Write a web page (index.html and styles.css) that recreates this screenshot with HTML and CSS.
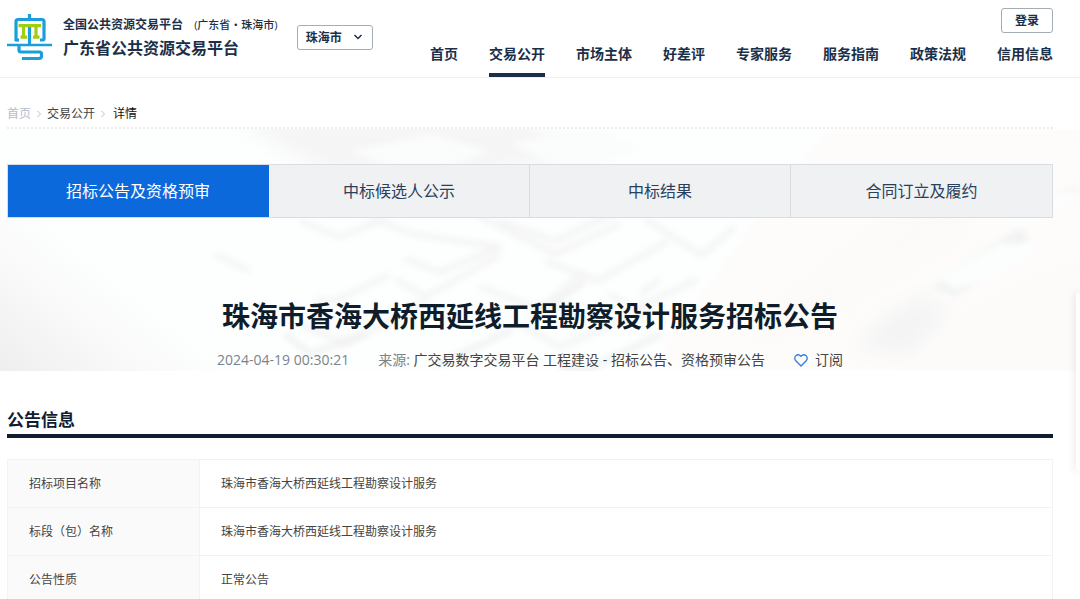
FILE: index.html
```html
<!DOCTYPE html>
<html lang="zh-CN">
<head>
<meta charset="utf-8">
<meta name="viewport" content="width=device-width, initial-scale=1">
<title>广东省公共资源交易平台</title>
<link rel="stylesheet" href="styles.css">
</head>
<body>
<header class="header">
  <a class="brand" href="#">
    <svg class="logo" viewBox="0 0 45 48" aria-hidden="true">
      <g fill="none" stroke="#1b9fdb" stroke-width="3.200">
        <path d="M22.500 0V7"/>
        <path d="M9 27V7.500Q9 5.500 11 5.500H35Q37 5.500 37 7.500V24.500Q37 26 35.500 26H33"/>
        <path d="M8 26H12"/>
        <path d="M22.500 13V31"/>
        <path d="M0 31H45" stroke-width="2.600"/>
        <path d="M12 32V36Q12 38 14 38H32.500Q34.500 38 34.500 40V42Q34.500 44.500 32 44.500H15"/>
      </g>
      <g fill="none" stroke="#9fce12" stroke-width="3.200">
        <path d="M11.500 11.700H34M16.500 12V23M29 12V23M13.500 23.200H20M26 23.200H32.500"/>
      </g>
    </svg>
    <span class="brand-text">
      <span class="brand-top">全国公共资源交易平台 <span class="brand-area">(广东省・珠海市)</span></span>
      <span class="brand-name">广东省公共资源交易平台</span>
    </span>
  </a>
  <div class="city">
    <select class="city-select" aria-label="选择城市"><option>珠海市</option></select>
    <svg class="city-arrow" viewBox="0 0 10 6" aria-hidden="true"><path d="M1.500 1L5 4.500L8.500 1" fill="none" stroke="#1b3048" stroke-width="1.500"/></svg>
  </div>
  <div class="header-right">
    <button class="login" type="button">登录</button>
    <nav class="nav">
      <a href="#">首页</a>
      <a class="active" href="#" aria-current="page">交易公开</a>
      <a href="#">市场主体</a>
      <a href="#">好差评</a>
      <a href="#">专家服务</a>
      <a href="#">服务指南</a>
      <a href="#">政策法规</a>
      <a href="#">信用信息</a>
    </nav>
  </div>
</header>
<main>
  <nav class="crumbs" aria-label="面包屑">
    <a class="crumb-home" href="#">首页</a>
    <svg viewBox="0 0 4 8" aria-hidden="true"><path d="M.5 1L3.500 4L.5 7"/></svg>
    <a href="#">交易公开</a>
    <svg viewBox="0 0 4 8" aria-hidden="true"><path d="M.5 1L3.500 4L.5 7"/></svg>
    <span class="crumb-here">详情</span>
  </nav>
  <section class="banner">
    <svg class="banner-art" viewBox="0 0 1080 242" preserveAspectRatio="none" aria-hidden="true">
      <defs>
        <filter id="soft" x="-20%" y="-20%" width="140%" height="140%"><feGaussianBlur stdDeviation="3"/></filter>
        <filter id="haze" x="-30%" y="-30%" width="160%" height="160%"><feGaussianBlur stdDeviation="10"/></filter>
        <linearGradient id="corner" gradientUnits="userSpaceOnUse" x1="0" y1="242" x2="90" y2="130"><stop offset="0" stop-color="#eeeeef"/><stop offset=".6" stop-color="#f9f9f9"/><stop offset="1" stop-color="#fdfefe"/></linearGradient>
      </defs>
      <rect width="1080" height="242" fill="#fdfefe"/>
      <path d="M0 60L260 242H0Z" fill="url(#corner)"/>
      <path d="M230 -10H520L600 30L420 50H340Z" fill="#f5f5f5" filter="url(#haze)"/>
      <path d="M350 22L420 50L490 22L430 5ZM510 14L570 44L640 20L600 0Z" fill="#fbfcfc" filter="url(#soft)"/>
      <g fill="none" stroke="#f4f4f5" stroke-width="6" stroke-linejoin="round" filter="url(#soft)">
        <path d="M300 92L340 108L385 90M215 125L250 142M315 170L335 172L389 146"/>
        <path d="M370 88L412 105L500 118L440 143L405 130M475 85L555 125L620 95"/>
        <path d="M395 150L425 168L500 126M300 195L345 215L428 172"/>
        <path d="M480 158L540 180L585 142M520 195L560 218L645 182" />
        <path d="M500 92L555 112L622 80M545 132L598 152L668 112M608 165L635 180L698 150"/>
        <path d="M645 90L702 126L735 98M660 150L640 165"/>
      </g>
      <g fill="none" stroke="#efeff0" stroke-width="5" filter="url(#soft)">
        <path d="M310 225L365 205M435 237L512 201M560 237L585 242L662 205M530 190L585 152M285 205L310 225"/>
      </g>
      <path d="M830 0H1080V242H690Q650 225 672 205L710 154L780 60Z" fill="#fdfcfb" filter="url(#soft)"/>
      <path d="M770 184L910 72L985 62L955 110Q870 165 750 220Z" fill="#fcfaf9" filter="url(#haze)"/>
      <path d="M932 158L992 116L1020 98L1030 110L975 154L955 168Z" fill="#f2f3f3" filter="url(#soft)"/>
      <path d="M938 148L1000 114L1040 118L990 150L955 160ZM990 72L1035 65L1080 62L1020 98Z" fill="#fcfefe" filter="url(#soft)"/>
      <path d="M855 219L885 188L925 165L950 185L910 227Z" fill="#f4f4f4" filter="url(#haze)"/>
      <path d="M915 235L970 180L1080 130V242H905Z" fill="#fcfbfa" filter="url(#soft)"/>
      <path d="M1045 66L1080 56V62L1055 66Z" fill="#f6f6f6" filter="url(#soft)"/>
    </svg>
    <div class="tabs">
      <button class="tab on" type="button">招标公告及资格预审</button>
      <button class="tab" type="button">中标候选人公示</button>
      <button class="tab" type="button">中标结果</button>
      <button class="tab" type="button">合同订立及履约</button>
    </div>
    <h1 class="title">珠海市香海大桥西延线工程勘察设计服务招标公告</h1>
    <div class="meta">
      <time>2024-04-19 00:30:21</time>
      <span class="source"><span class="label">来源:</span> 广交易数字交易平台 工程建设 - 招标公告、资格预审公告</span>
      <button class="subscribe" type="button">
        <svg viewBox="0 0 14 13" aria-hidden="true"><path d="M7 12L1.800 6.800C.3 5.200.5 2.700 2.100 1.500C3.600.4 5.600.7 7 2.300C8.400.7 10.400.4 11.900 1.500C13.500 2.700 13.700 5.200 12.200 6.800Z" fill="none" stroke="#2b7de9" stroke-width="1.300"/></svg>
        订阅
      </button>
    </div>
  </section>
  <section class="info">
    <h2 class="info-title">公告信息</h2>
    <table class="info-table">
      <tbody>
        <tr><th scope="row">招标项目名称</th><td>珠海市香海大桥西延线工程勘察设计服务</td></tr>
        <tr><th scope="row">标段（包）名称</th><td>珠海市香海大桥西延线工程勘察设计服务</td></tr>
        <tr><th scope="row">公告性质</th><td>正常公告</td></tr>
      </tbody>
    </table>
  </section>
</main>
<aside class="side-panel" aria-label="工具栏"></aside>
</body>
</html>
```
FILE: styles.css
```css
* { box-sizing: border-box; }
html { scrollbar-width: none; }
body {
  margin: 0;
  background: #fff;
  color: #444;
  font-family: "Open Sans", "Noto Sans CJK SC", sans-serif;
  font-size: 12px;
  line-height: 20px;
}
a { color: inherit; text-decoration: none; }
button, select { font: inherit; color: inherit; }
h1, h2 { margin: 0; }

.header {
  display: flex;
  align-items: flex-start;
  height: 78px;
  padding: 0 27px 0 7px;
  border-bottom: 1px solid #f0f0f0;
  color: #1b3048;
  font-weight: 700;
}
.brand { display: flex; gap: 11px; padding-top: 14px; }
.logo { width: 45px; height: 48px; }
.brand-text { display: flex; flex-direction: column; white-space: nowrap; }
.brand-top { line-height: 22px; }
.brand-area { margin-left: 8px; font-size: 11px; font-weight: 500; }
.brand-name { font-size: 16px; line-height: 24px; }
.city { position: relative; margin: 25px 0 0 19px; }
.city-select {
  appearance: none;
  width: 76px;
  height: 25px;
  padding: 0 8px;
  border: 1px solid #a4acb6;
  border-radius: 3px;
  background: #fff;
}
.city-arrow { position: absolute; right: 10px; top: 9px; width: 10px; height: 6px; pointer-events: none; }
.header-right { display: flex; flex-direction: column; align-items: flex-end; margin-left: auto; padding-top: 8px; }
.login {
  width: 52px;
  height: 25px;
  padding: 0;
  border: 1px solid #a4acb6;
  border-radius: 3px;
  background: #fff;
}
.nav { display: flex; gap: 31px; font-size: 14px; line-height: 42px; white-space: nowrap; }
.nav a { height: 44px; border-bottom: 4px solid transparent; }
.nav .active { border-bottom-color: #1b3048; }

.crumbs {
  display: flex;
  align-items: center;
  gap: 6px;
  margin: 24px 27px 0 7px;
  padding-bottom: 2px;
  height: 27px;
  border-bottom: 2px dotted #ececec;
}
.crumbs svg { width: 4px; height: 8px; fill: none; stroke: #b9c2cb; }
.crumb-home { color: #b4bcc6; }
.crumb-here { margin-left: 2px; color: #111; }

.banner { position: relative; z-index: 0; padding: 35px 27px 0 7px; height: 242px; }
.banner-art { position: absolute; z-index: -1; inset: 0; width: 100%; height: 100%; }
.tabs { display: grid; grid-template-columns: repeat(4, 1fr); border: 1px solid #d9dde3; }
.tab {
  height: 52px;
  padding: 0;
  border: 0;
  border-right: 1px solid #d9dde3;
  background: #f0f1f3;
  color: #2a3f5c;
  font-size: 16px;
}
.tab:last-child { border-right: 0; }
.tab.on { border-right-color: #0c69dc; background: #0c69dc; color: #fff; }
.title { margin-top: 76px; color: #0f1d2b; font-size: 28px; line-height: 44px; text-align: center; }
.meta {
  display: flex;
  justify-content: center;
  gap: 29px;
  margin-top: 12px;
  font-size: 14px;
  white-space: nowrap;
}
.meta time, .label { color: #7b838b; }
.subscribe { display: flex; align-items: center; gap: 7px; padding: 0; border: 0; background: none; }
.subscribe svg { width: 14px; height: 13px; }

.info { padding: 35px 27px 0 7px; }
.info-title { border-bottom: 4px solid #101d30; color: #101d30; font-size: 17px; line-height: 28px; }
.info-table { width: 100%; margin-top: 21px; border-collapse: collapse; table-layout: fixed; }
.info-table th, .info-table td { height: 48px; padding: 0 21px; border: 1px solid #f3f3f3; font-weight: 400; text-align: left; }
.info-table th { width: 192px; background: #fafafa; }

.side-panel {
  position: fixed;
  top: 293px;
  right: 0;
  width: 4px;
  height: 178px;
  border-radius: 3px 0 0 3px;
  background: #fff;
  box-shadow: 0 0 8px rgba(0, 0, 0, .15);
}
```
